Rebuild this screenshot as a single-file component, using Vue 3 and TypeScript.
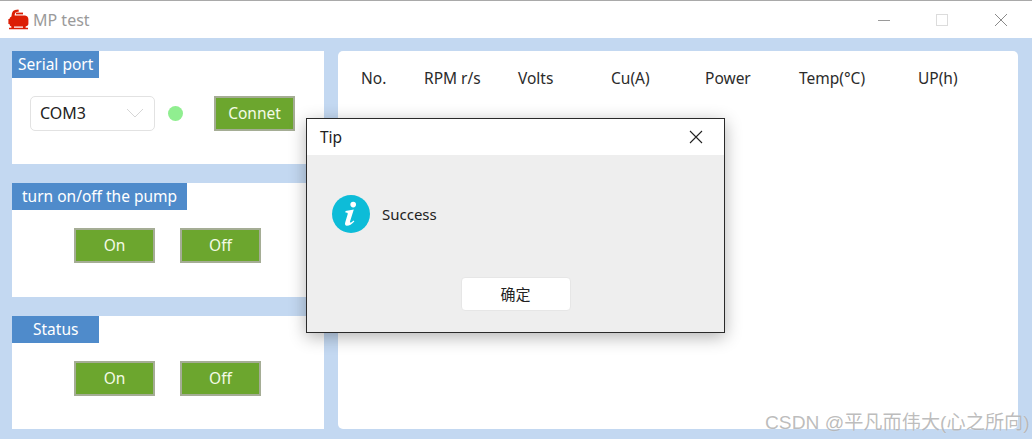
<script setup lang="ts">
const columns: string[] = ['No.', 'RPM r/s', 'Volts', 'Cu(A)', 'Power', 'Temp(°C)', 'UP(h)']
</script>

<template>
  <div class="window">
    <header class="titlebar">
      <div class="brand">
        <svg class="logo" width="21" height="21" viewBox="0 0 21 21">
          <path fill="#dc1e04" d="M3.4 7.4 L4 4 Q4.6 1.6 7 1 L10.4 0.4 L11 2.4 L8.6 3 Q7 3.4 6.8 5.2 L6.6 6.4 L17 6.4 Q20.4 6.8 20.4 10.4 L20.4 14.6 Q20.4 17.2 17.6 17.4 L3.4 17.4 Q1.6 17.2 1.4 15 L0.4 15 L0.4 10 L1.4 10 Q1.6 8 3.4 7.4 Z" />
          <path fill="#dc1e04" d="M8 3.6 L15 3.6 L15 5.4 L8 5.4 Z" />
          <path fill="#dc1e04" d="M3.4 17 L6 17 L6 18.8 L15 18.8 L15 17 L17.6 17 L17.6 18.8 L20 18.8 L20 20.2 L1 20.2 L1 18.8 L3.4 18.8 Z" />
        </svg>
        <span class="app-title">MP test</span>
      </div>
      <div class="win-controls">
        <svg width="14" height="14" viewBox="0 0 14 14"><path d="M2 7.5H14" stroke="#9a9a9a" stroke-width="1" fill="none" /></svg>
        <svg width="14" height="14" viewBox="0 0 14 14"><rect x="1.5" y="1.5" width="11" height="11" stroke="#dcdcdc" stroke-width="1" fill="none" /></svg>
        <svg width="14" height="14" viewBox="0 0 14 14"><path d="M1 1L13 13M13 1L1 13" stroke="#8a8a8a" stroke-width="1" fill="none" /></svg>
      </div>
    </header>

    <main class="content">
      <div class="left">
        <section class="panel">
          <h2 class="tag">Serial port</h2>
          <div class="row serial">
            <div class="select">
              <span>COM3</span>
              <svg width="18" height="10" viewBox="0 0 18 10"><path d="M1 1L9 9L17 1" stroke="#d6d6d6" stroke-width="1" fill="none" /></svg>
            </div>
            <span class="led"></span>
            <button class="btn">Connet</button>
          </div>
        </section>
        <section class="panel tall">
          <h2 class="tag wide">turn on/off the pump</h2>
          <div class="row actions">
            <button class="btn">On</button>
            <button class="btn">Off</button>
          </div>
        </section>
        <section class="panel">
          <h2 class="tag centered">Status</h2>
          <div class="row actions">
            <button class="btn">On</button>
            <button class="btn">Off</button>
          </div>
        </section>
      </div>
      <section class="table-panel">
        <div class="thead">
          <span v-for="c in columns" :key="c">{{ c }}</span>
        </div>
      </section>
    </main>

    <div class="dialog">
      <div class="dialog-head">
        <span>Tip</span>
        <svg width="14" height="14" viewBox="0 0 14 14"><path d="M1 1L13 13M13 1L1 13" stroke="#222" stroke-width="1.1" fill="none" /></svg>
      </div>
      <div class="dialog-body">
        <div class="message">
          <svg width="38" height="38" viewBox="0 0 38 38">
            <circle cx="19" cy="19" r="19" fill="#0dbcd8" />
            <circle cx="21.2" cy="9.6" r="2.8" fill="#fff" />
            <path fill="#fff" d="M13.5 16 L21.8 14.6 L18 26.4 Q17.6 28 19 27.4 L21.8 25.6 L22.3 26.6 Q18.6 30.8 14.8 30.8 Q12.4 30.6 13.2 27.6 L15.8 18.8 Q16 17.4 13.4 17.4 Z" />
          </svg>
          <span>Success</span>
        </div>
        <div class="dialog-foot">
          <button class="ok">确定</button>
        </div>
      </div>
    </div>

    <div class="watermark">CSDN @平凡而伟大(心之所向)</div>
  </div>
</template>

<style>
html, body { margin: 0; padding: 0; overflow: hidden; background: #fff; }
</style>

<style scoped>
.window {
  position: relative;
  width: 1032px;
  height: 439px;
  overflow: hidden;
  display: flex;
  flex-direction: column;
  box-sizing: border-box;
  border-top: 1px solid #a9a9a9;
  background: #c3d8f1;
  font-family: "Noto Sans", "Noto Sans CJK SC", sans-serif;
  font-size: 15.5px;
  color: #222;
}
.titlebar {
  height: 37px;
  flex: none;
  background: #fff;
  display: flex;
  align-items: center;
  justify-content: space-between;
  padding: 0 24px 0 8px;
}
.brand { display: flex; align-items: center; gap: 4px; }
.logo { display: block; }
.app-title { color: #9a9a9a; font-size: 16px; }
.win-controls { display: flex; gap: 45px; align-items: center; }
.win-controls svg { display: block; }
.content {
  flex: 1;
  display: flex;
  gap: 14px;
  padding: 13px 14px 10px 12px;
  min-height: 0;
}
.left {
  width: 312px;
  flex: none;
  display: flex;
  flex-direction: column;
  gap: 19px;
}
.panel {
  height: 113px;
  flex: none;
  background: #fff;
  display: flex;
  flex-direction: column;
}
.panel.tall { height: 114px; }
.tag {
  margin: 0;
  width: 87px;
  height: 27px;
  flex: none;
  box-sizing: border-box;
  padding-left: 6px;
  background: #4f8bcb;
  color: #fff;
  font-weight: 400;
  font-size: 15.5px;
  line-height: 27px;
  white-space: nowrap;
}
.tag.wide { width: 175px; padding-left: 10px; }
.tag.centered { padding-left: 21px; }
.row { display: flex; align-items: center; }
.serial { padding: 18px 0 0 18px; }
.actions { padding: 18px 0 0 62px; gap: 25px; }
.select {
  width: 125px;
  height: 35px;
  box-sizing: border-box;
  border: 1px solid #e2e2e2;
  border-radius: 5px;
  display: flex;
  align-items: center;
  justify-content: space-between;
  padding: 0 10px 1px 9px;
  font-size: 16px;
}
.led {
  width: 15px;
  height: 15px;
  border-radius: 50%;
  background: #90ee90;
  margin: 0 31px 0 13px;
}
.btn {
  width: 81px;
  height: 35px;
  box-sizing: border-box;
  padding: 0 0 1px 0;
  border: 2px solid #a5ad95;
  background: #6ca62e;
  color: #f4fbe6;
  font-family: inherit;
  font-size: 15.5px;
}
.table-panel {
  flex: 1;
  background: #fff;
  border-radius: 5px;
}
.thead {
  display: grid;
  grid-template-columns: 63px 94px 93px 94px 94px 119px auto;
  padding: 17px 0 0 23px;
  font-size: 15.5px;
  color: #2b2b2b;
  line-height: 20px;
}
.dialog {
  position: absolute;
  left: 306px;
  top: 117px;
  width: 419px;
  height: 215px;
  box-sizing: border-box;
  border: 1px solid #2a2a2a;
  background: #eee;
  box-shadow: 0 4px 16px rgba(0, 0, 0, 0.3);
  display: flex;
  flex-direction: column;
}
.dialog-head {
  height: 36px;
  flex: none;
  box-sizing: border-box;
  background: #fff;
  display: flex;
  align-items: center;
  justify-content: space-between;
  padding: 0 21px 1px 13px;
  font-size: 15.5px;
}
.dialog-head svg { display: block; margin-top: 1px; }
.dialog-body {
  flex: 1;
  display: flex;
  flex-direction: column;
  justify-content: space-between;
  padding: 40px 0 21px 25px;
}
.message { display: flex; align-items: center; gap: 12px; font-size: 15px; }
.message svg { display: block; }
.dialog-foot { display: flex; justify-content: center; padding-right: 25px; }
.ok {
  width: 110px;
  height: 34px;
  padding: 0 0 2px 0;
  box-sizing: border-box;
  border: 1px solid #e6e6e6;
  border-radius: 4px;
  background: #fff;
  color: #222;
  font-family: "Noto Sans CJK SC", sans-serif;
  font-size: 15px;
}
.watermark {
  position: absolute;
  left: 765px;
  top: 406px;
  font-family: "Liberation Sans", "Noto Sans CJK SC", sans-serif;
  font-size: 19.2px;
  color: rgba(160, 160, 160, 0.7);
  text-shadow: 0 0 1px rgba(255, 255, 255, 0.7);
  white-space: nowrap;
}
</style>
